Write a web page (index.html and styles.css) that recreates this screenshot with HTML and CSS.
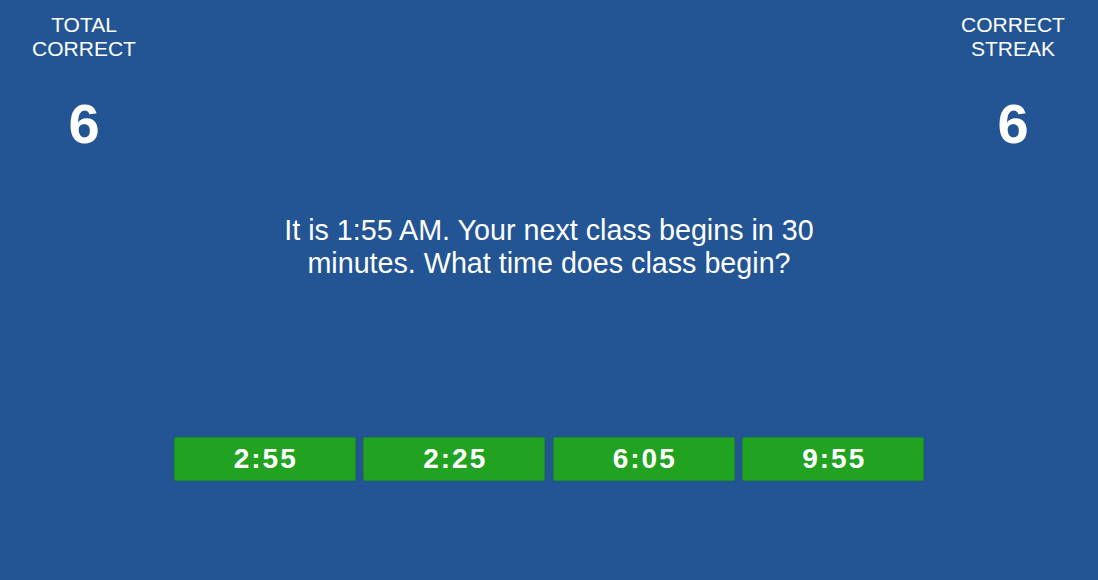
FILE: index.html
```html
<!DOCTYPE html>
<html>
<head>
<meta charset="utf-8">
<link rel="stylesheet" href="styles.css">
</head>
<body>
<div class="page">
  <header class="stats">
    <div class="stat">
      <div class="stat-label">TOTAL<br>CORRECT</div>
      <div class="stat-value">6</div>
    </div>
    <div class="stat">
      <div class="stat-label">CORRECT<br>STREAK</div>
      <div class="stat-value">6</div>
    </div>
  </header>
  <p class="question">It is 1:55 AM. Your next class begins in 30 minutes. What time does class begin?</p>
  <div class="answers">
    <button class="answer">2:55</button>
    <button class="answer">2:25</button>
    <button class="answer">6:05</button>
    <button class="answer">9:55</button>
  </div>
</div>
</body>
</html>
```
FILE: styles.css
```css
html, body {
  margin: 0;
  padding: 0;
  height: 100%;
  background: #235594;
}
body {
  font-family: "Liberation Sans", Arial, sans-serif;
  color: #ffffff;
}
.page {
  padding-top: 13px;
}
.stats {
  display: flex;
  justify-content: space-between;
}
.stat {
  width: 168px;
  text-align: center;
}
.stat:last-child {
  width: 170px;
}
.stat-label {
  font-size: 21px;
  line-height: 24px;
}
.stat-value {
  margin-top: 34.6px;
  font-size: 56px;
  line-height: 56px;
  font-weight: bold;
}
.question {
  width: 570px;
  margin: 62px auto 0;
  font-size: 28.7px;
  line-height: 33px;
  text-align: center;
}
.answers {
  display: flex;
  justify-content: center;
  gap: 7.5px;
  margin-top: 157.4px;
}
.answer {
  width: 182px;
  height: 44px;
  box-sizing: border-box;
  border: 1px solid #1b8a1f;
  border-radius: 2px;
  background: #21a321;
  color: #ffffff;
  font-family: "Liberation Sans", Arial, sans-serif;
  font-weight: bold;
  font-size: 28px;
  letter-spacing: 2px;
  text-indent: 2px;
  padding: 0;
  display: flex;
  align-items: center;
  justify-content: center;
}
```
